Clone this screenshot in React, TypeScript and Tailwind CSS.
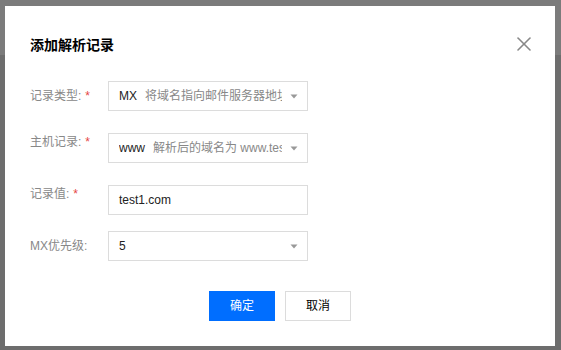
import { X } from "lucide-react";

const font = { fontFamily: '"Liberation Sans", "Noto Sans CJK SC", sans-serif' };

function Label({ text, required }: { text: string; required?: boolean }) {
  return (
    <div className="w-[78px] shrink-0 text-[12px] leading-[20px] text-[#888]">
      {text}
      {required && <span className="ml-[4px] text-[#e54545]">*</span>}
    </div>
  );
}

function Caret() {
  return (
    <svg width="8" height="5" viewBox="0 0 8 5" className="shrink-0">
      <path d="M0.5 0.5 L7.5 0.5 L4 4.5 Z" fill="#999" />
    </svg>
  );
}

function SelectBox({ value, hint }: { value: string; hint?: string }) {
  return (
    <div className="flex items-center w-[200px] h-[30px] border border-[#dcdcdc] bg-white pl-[10px] pr-[9px]">
      <div className="flex-1 min-w-0 overflow-hidden whitespace-nowrap text-[12px] text-[#222] mr-[8px]">
        {value}
        {hint && <span className="ml-[8px] text-[#888]">{hint}</span>}
      </div>
      <Caret />
    </div>
  );
}

export default function App() {
  return (
    <div className="relative w-[561px] h-[350px] overflow-hidden" style={font}>
      {/* page behind the mask */}
      <div className="flex flex-col h-full">
        <div className="h-[55px] bg-[#7b7b7b]"></div>
        <div className="flex-1 bg-[#6d6d6d]"></div>
      </div>

      {/* dialog */}
      <div className="absolute left-[5px] top-[6px] w-[550px] h-[340px] bg-white px-[25px] pt-[29px]">
        <div className="flex items-center justify-between h-[20px]">
          <h3 className="text-[14px] font-bold text-[#000] leading-[20px]">添加解析记录</h3>
          <X size={24} strokeWidth={1.6} className="text-[#888] mr-[-6px] mt-[-2px]" />
        </div>

        <div className="flex flex-col mt-[26px]">
          <div className="flex items-center">
            <Label text="记录类型:" required />
            <SelectBox value="MX" hint="将域名指向邮件服务器地址" />
          </div>

          <div className="flex items-start mt-[22px]">
            <div className="mt-[-1px]">
              <Label text="主机记录:" required />
            </div>
            <SelectBox value="www" hint="解析后的域名为 www.test1.com" />
          </div>

          <div className="flex items-start mt-[22px]">
            <div className="mt-[-1px]">
              <Label text="记录值:" required />
            </div>
            <div className="flex items-center w-[200px] h-[30px] border border-[#dcdcdc] px-[10px] text-[12px] text-[#222]">
              test1.com
            </div>
          </div>

          <div className="flex items-center mt-[16px]">
            <Label text="MX优先级:" />
            <SelectBox value="5" />
          </div>
        </div>

        <div className="flex justify-center gap-[10px] mt-[30px]">
          <button className="w-[66px] h-[30px] bg-[#006eff] text-white text-[12px]">确定</button>
          <button className="w-[66px] h-[30px] border border-[#dcdcdc] bg-white text-[#000] text-[12px]">取消</button>
        </div>
      </div>
    </div>
  );
}
